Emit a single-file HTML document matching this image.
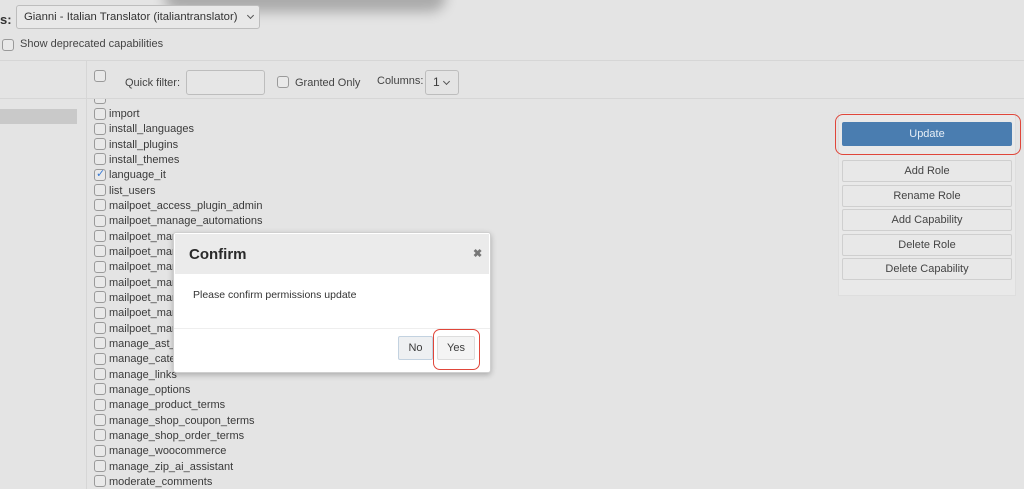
<!DOCTYPE html>
<html><head><style>
*{box-sizing:border-box;margin:0;padding:0}
body{width:1024px;height:489px;overflow:hidden;background:#e4e4e4;font-family:"Liberation Sans",sans-serif;color:#3c3c3c;position:relative}
.a{position:absolute}
.cb{position:absolute;width:12px;height:12px;border:1px solid #9a9a9a;border-radius:3px;background:#e9e9e9}
.it{position:absolute;left:109px;font-size:11px;line-height:13px;color:#3a3a3a}
.btn{position:absolute;left:842px;width:170px;height:22px;border:1px solid #cfcfcf;border-radius:2px;background:#e8e8e8;font-size:11px;text-align:center;line-height:20px;color:#444}
.chev{position:absolute;width:5px;height:5px;border-right:1.3px solid #555;border-bottom:1.3px solid #555;transform:rotate(45deg)}
</style></head><body>
<div class="a" style="left:170px;top:-20px;width:270px;height:20px;box-shadow:0 6px 12px 6px rgba(0,0,0,.25);border-radius:10px"></div>
<div class="a" style="left:0;top:12px;font-size:13px;font-weight:bold;color:#333">s:</div>
<div class="a" style="left:16px;top:5px;width:244px;height:24px;border:1px solid #bdbdbd;border-radius:3px;background:#e8e8e8;font-size:11.3px;line-height:22px;padding-left:7px;color:#333;white-space:nowrap">Gianni - Italian Translator (italiantranslator)<span class="chev" style="left:231px;top:7px"></span></div>
<div class="cb" style="left:2px;top:39px"></div>
<div class="a" style="left:20px;top:38px;font-size:11px;color:#444">Show deprecated capabilities</div>
<div class="a" style="left:0;top:60px;width:1024px;height:1px;background:#d6d6d6"></div>
<div class="a" style="left:0;top:98px;width:1024px;height:1px;background:#d6d6d6"></div>
<div class="a" style="left:86px;top:61px;width:1px;height:428px;background:#d6d6d6"></div>
<div class="cb" style="left:94px;top:70px"></div>
<div class="a" style="left:125px;top:77px;font-size:11px;color:#444">Quick filter:</div>
<div class="a" style="left:186px;top:70px;width:79px;height:25px;border:1px solid #bdbdbd;border-radius:3px;background:#e6e6e6"></div>
<div class="cb" style="left:277px;top:76px"></div>
<div class="a" style="left:295px;top:77px;font-size:11px;color:#444">Granted Only</div>
<div class="a" style="left:377px;top:75px;font-size:11px;color:#444">Columns:</div>
<div class="a" style="left:425px;top:70px;width:34px;height:25px;border:1px solid #bdbdbd;border-radius:3px;font-size:12px;line-height:23px;padding-left:7px">1<span class="chev" style="left:18px;top:8px"></span></div>
<div class="a" style="left:0;top:109px;width:77px;height:15px;background:#c9c9c9"></div>
<div class="cb" style="left:94px;top:99px;height:5px;border-top:none;border-radius:0 0 3px 3px"></div>
<div id="list"></div>
<div class="a" style="left:838px;top:112px;width:178px;height:184px;background:#e9e9e9;border:1px solid #dedede"></div>
<div class="a" style="left:842px;top:122px;width:170px;height:24px;background:#4a7db0;border-radius:2px;color:#e6eef6;font-size:11px;text-align:center;line-height:24px">Update</div>
<div class="a" style="left:835px;top:114px;width:186px;height:41px;border:1.5px solid #e0463a;border-radius:8px"></div>
<div class="btn" style="top:160px">Add Role</div>
<div class="btn" style="top:185px">Rename Role</div>
<div class="btn" style="top:209px">Add Capability</div>
<div class="btn" style="top:234px">Delete Role</div>
<div class="btn" style="top:258px">Delete Capability</div>
<div class="a" style="left:173px;top:232px;width:318px;height:141px;background:#fff;border:1px solid #cfcfcf;border-radius:3px;box-shadow:0 2px 6px rgba(0,0,0,.25)">
 <div class="a" style="left:1px;top:1px;width:314px;height:40px;background:#ebebeb"></div>
 <div class="a" style="left:15px;top:13px;font-size:15px;font-weight:bold;color:#2a2a2a">Confirm</div>
 <div class="a" style="left:299px;top:14px;font-size:11px;font-weight:bold;color:#777">&#10006;</div>
 <div class="a" style="left:19px;top:56px;font-size:10.5px;color:#333">Please confirm permissions update</div>
 <div class="a" style="left:0;top:95px;width:316px;height:1px;background:#eee"></div>
 <div class="a" style="left:224px;top:103px;width:35px;height:24px;border:1px solid #c3d2e0;border-radius:2px;background:#eef0f2;font-size:11px;text-align:center;line-height:22px">No</div>
 <div class="a" style="left:263px;top:103px;width:38px;height:24px;border:1px solid #ddd;border-radius:2px;background:#f4f4f4;font-size:11px;text-align:center;line-height:22px">Yes</div>
</div>
<div class="a" style="left:433px;top:329px;width:47px;height:41px;border:1.5px solid #e0463a;border-radius:7px"></div>
<script>
var n=["import","install_languages","install_plugins","install_themes","language_it","list_users","mailpoet_access_plugin_admin","mailpoet_manage_automations","mailpoet_manage_emails","mailpoet_manage_features","mailpoet_manage_forms","mailpoet_manage_help","mailpoet_manage_segments","mailpoet_manage_settings","mailpoet_manage_subscribers","manage_ast_settings","manage_categories","manage_links","manage_options","manage_product_terms","manage_shop_coupon_terms","manage_shop_order_terms","manage_woocommerce","manage_zip_ai_assistant","moderate_comments"];
var h="";n.forEach(function(t,i){var y=107+i*15.33;h+='<div class="cb" style="left:94px;top:'+(y+0.5)+'px">'+(i==4?'<span style="position:absolute;left:1px;top:-3px;color:#3a7bd5;font-size:11px">&#10003;</span>':'')+'</div><div class="it" style="top:'+(y+1)+'px">'+t+'</div>';});
document.getElementById("list").innerHTML=h;
</script>
</body></html>
